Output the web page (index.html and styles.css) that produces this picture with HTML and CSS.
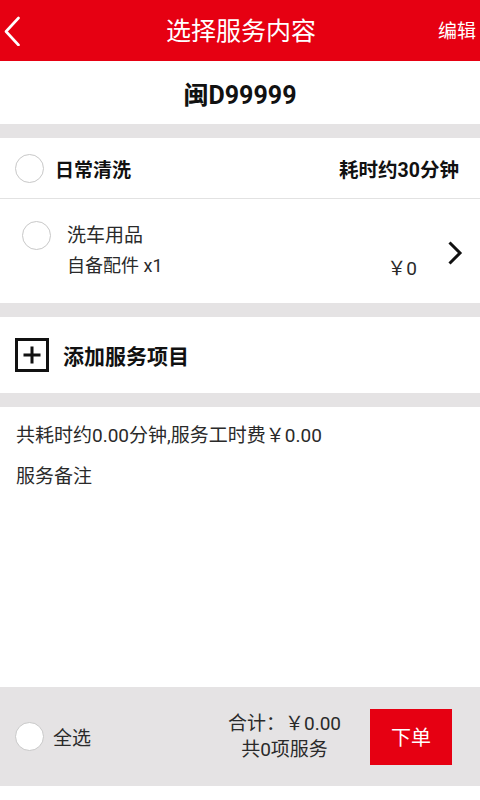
FILE: index.html
```html
<!DOCTYPE html>
<html lang="zh">
<head>
<meta charset="utf-8">
<link rel="stylesheet" href="styles.css">
</head>
<body>
<div class="page">
  <header class="topbar">
    <svg class="back" width="18" height="30" viewBox="0 0 18 30"><path d="M15.5 2 L3 15.5 L15.5 29" fill="none" stroke="#fff" stroke-width="2.6" stroke-linecap="round" stroke-linejoin="round"/></svg>
    <div class="title">选择服务内容</div>
    <div class="edit">编辑</div>
  </header>
  <div class="plate">闽D99999</div>
  <div class="gap"></div>
  <div class="svc-row">
    <span class="radio"></span>
    <span class="svc-name">日常清洗</span>
    <span class="svc-time">耗时约30分钟</span>
  </div>
  <div class="item-row">
    <span class="radio"></span>
    <div class="item-info">
      <div class="item-name">洗车用品</div>
      <div class="item-sub">自备配件 x1</div>
    </div>
    <div class="item-price">￥0</div>
    <svg class="chev" width="16" height="26" viewBox="0 0 16 26"><path d="M2.5 2.5 L13 13 L2.5 23.5" fill="none" stroke="#111" stroke-width="3" stroke-linejoin="miter"/></svg>
  </div>
  <div class="gap"></div>
  <div class="add-row">
    <svg class="plus" width="34" height="34" viewBox="0 0 34 34"><rect x="1.5" y="1.5" width="31" height="31" fill="none" stroke="#111" stroke-width="3"/><path d="M8.5 17 H25.5 M17 8.5 V25.5" stroke="#111" stroke-width="3"/></svg>
    <span class="add-text">添加服务项目</span>
  </div>
  <div class="gap"></div>
  <div class="summary">
    <p class="line">共耗时约0.00分钟,服务工时费￥0.00</p>
    <p class="line">服务备注</p>
  </div>
  <footer class="bottombar">
    <span class="radio"></span>
    <span class="all">全选</span>
    <div class="totals">
      <div>合计：￥0.00</div>
      <div>共0项服务</div>
    </div>
    <div class="order">下单</div>
  </footer>
  <div class="tail"></div>
</div>
</body>
</html>
```
FILE: styles.css
```css
* { box-sizing: border-box; }
html, body { margin: 0; padding: 0; background: #fff; }
body {
  font-family: Roboto, "Noto Sans CJK SC", sans-serif;
  color: #2a2a2a;
  width: 480px;
  height: 800px;
  overflow: hidden;
}
.page { display: flex; flex-direction: column; height: 800px; }
.topbar {
  height: 61px;
  background: #e60012;
  display: flex;
  align-items: center;
  color: #fff;
  padding: 0 4px 0 3px;
  flex-shrink: 0;
}
.back { flex-shrink: 0; margin-top: 1px; }
.title {
  flex: 1;
  text-align: center;
  font-size: 25px;
  line-height: 1;
  padding-left: 23px;
  margin-top: 2px;
}
.edit { font-size: 19px; line-height: 1; width: 38px; margin-top: 2px; }
.plate {
  height: 63px;
  display: flex;
  align-items: center;
  justify-content: center;
  font-size: 25px;
  font-weight: 700;
  color: #111;
  flex-shrink: 0;
}
.gap { height: 14px; background: #e5e3e4; flex-shrink: 0; }
.svc-row {
  height: 61px;
  display: flex;
  align-items: center;
  padding: 0 21px 0 15px;
  border-bottom: 1px solid #e2e2e2;
  flex-shrink: 0;
}
.radio {
  width: 29px;
  height: 29px;
  border-radius: 50%;
  border: 1px solid #c8c8c8;
  background: #fff;
  flex-shrink: 0;
}
.svc-name { font-size: 19px; font-weight: 700; color: #111; margin-left: 11px; flex: 1; }
.svc-time { font-size: 19.5px; font-weight: 700; color: #111; }
.item-row {
  height: 104px;
  display: flex;
  align-items: center;
  padding: 0 17px 0 22px;
  flex-shrink: 0;
}
.item-row .radio { align-self: flex-start; margin-top: 22px; }
.item-info { flex: 1; margin-left: 16px; }
.item-name { font-size: 19px; line-height: 30px; }
.item-sub { font-size: 18px; line-height: 30px; }
.item-price { font-size: 19px; margin-top: 30px; margin-right: 30px; }
.chev { flex-shrink: 0; margin-top: 4px; }
.add-row {
  height: 76px;
  display: flex;
  align-items: center;
  padding-left: 15px;
  flex-shrink: 0;
}
.add-text { font-size: 21px; font-weight: 700; color: #111; margin-left: 14px; }
.summary { flex: 1; padding: 15px 16px 0; }
.line { margin: 0 0 13px; font-size: 19px; line-height: 28px; }
.bottombar {
  height: 99px;
  background: #e5e3e4;
  display: flex;
  align-items: center;
  padding: 0 28px 0 15px;
  flex-shrink: 0;
}
.all { font-size: 19px; margin-left: 9px; flex: 1; }
.totals { text-align: center; font-size: 19px; line-height: 26px; margin-right: 29px; }
.order {
  width: 82px;
  height: 56px;
  background: #e60012;
  color: #fff;
  font-size: 20px;
  display: flex;
  align-items: center;
  justify-content: center;
}
.tail { height: 14px; background: #fff; flex-shrink: 0; }
```
